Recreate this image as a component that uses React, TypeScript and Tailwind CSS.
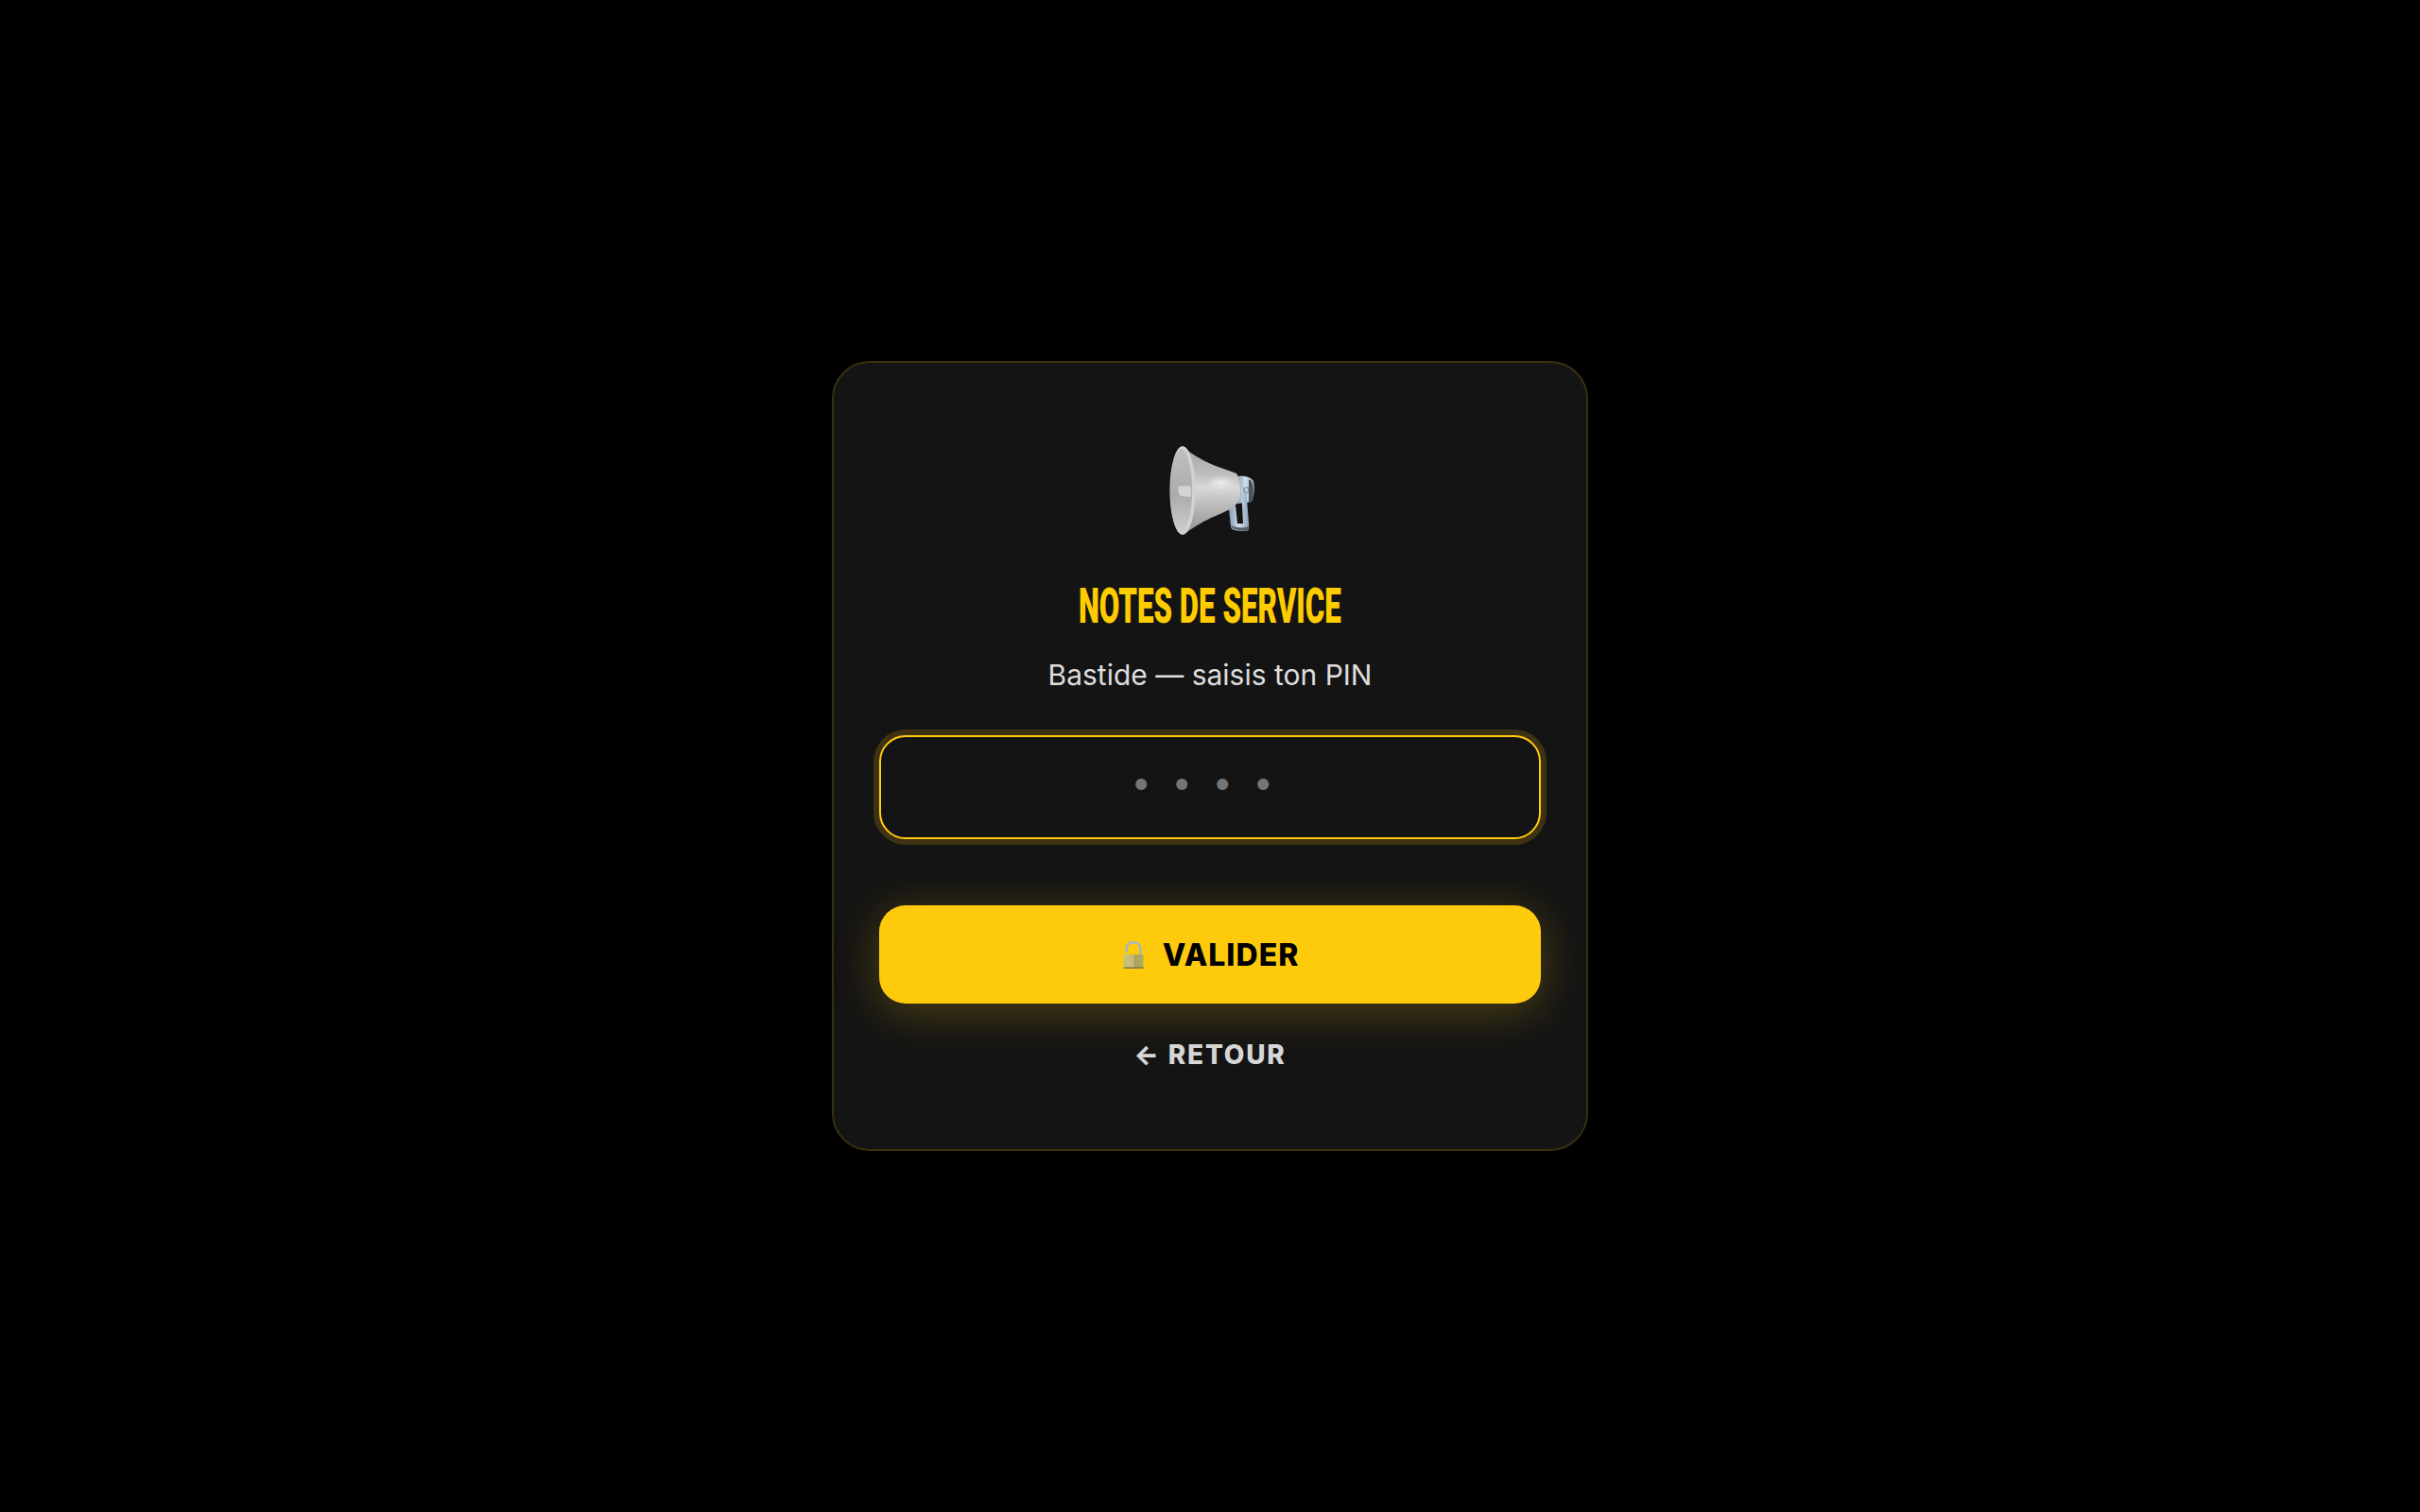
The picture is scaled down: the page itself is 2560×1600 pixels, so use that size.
import React from 'react';

const MegaphoneIcon = () => (
  <svg width="92" height="96" viewBox="38 20 92 96" className="ml-[6px]" aria-hidden="true">
    <defs>
      <linearGradient id="hornBody" x1="0" y1="0" x2="0" y2="1">
        <stop offset="0" stopColor="#a5a5a5" />
        <stop offset="0.3" stopColor="#bcbcbc" />
        <stop offset="0.47" stopColor="#d8d8d8" />
        <stop offset="0.65" stopColor="#bdbdbd" />
        <stop offset="1" stopColor="#909090" />
      </linearGradient>
      <linearGradient id="hornInner" x1="0" y1="0" x2="0" y2="1">
        <stop offset="0" stopColor="#c0c0c0" />
        <stop offset="0.55" stopColor="#ababab" />
        <stop offset="1" stopColor="#cdcdcd" />
      </linearGradient>
      <linearGradient id="steel" x1="0" y1="0" x2="1" y2="0">
        <stop offset="0" stopColor="#7f9ab3" />
        <stop offset="0.5" stopColor="#d3e0ea" />
        <stop offset="1" stopColor="#8aa3b9" />
      </linearGradient>
      <radialGradient id="hornShine" cx="0.5" cy="0.5" r="0.5">
        <stop offset="0" stopColor="#ececec" />
        <stop offset="1" stopColor="#ececec" stopOpacity="0" />
      </radialGradient>
    </defs>
    {/* back cap */}
    <path d="M109 53 C116 52 124 53 127 58 C128.500 65 128 73 125 80 L110 82 Z" fill="url(#steel)" />
    <path d="M124 57 C127.500 63 127.500 73 125 80 L122 80 L122 57 Z" fill="#4b5358" />
    {/* handle */}
    <path d="M101 88 L103 106 C103 109 106 110 110 110.500 L120 111 C123 110 122 106 122 102 L119 65 L114 65 L116 103 L110 103 L108 84 Z" fill="url(#steel)" />
    <path d="M103 105 C104 109 108 110 120 111 C123 110 122.500 108 122 106 C118 108 110 108 103 105 Z" fill="#5c6063" />
    {/* body */}
    <path d="M52 21.700 C60 28 70 35 87 42 C94 45 102 47 109 50 C113 56 114 70 112 78 C109 83 106 86 102 88 C96 91 91 93 87 95 C76 99 64 107 52 115 Z" fill="url(#hornBody)" />
    <ellipse cx="93" cy="60" rx="16" ry="8" fill="url(#hornShine)" />
    <ellipse cx="119.500" cy="67.500" rx="2.600" ry="2.800" fill="#c6d2dc" stroke="#58636c" strokeWidth="0.800" />
    {/* mouth */}
    <ellipse cx="52" cy="68" rx="13.500" ry="47" fill="#d2d2d2" />
    <ellipse cx="50.500" cy="68" rx="11.500" ry="44" fill="url(#hornInner)" />
    <path d="M48 63.500 L60 63 C61.500 66 61.500 72 60 75 L50 74 C47 72 47 65 48 63.500 Z" fill="#d2d2d2" />
  </svg>
);

const OpenLockIcon = () => (
  <svg width="22" height="30" viewBox="0 0 22 30" aria-hidden="true">
    <defs>
      <linearGradient id="lockBody" x1="0" y1="0" x2="1" y2="0">
        <stop offset="0" stopColor="#cbc27f" />
        <stop offset="0.5" stopColor="#c4ba74" />
        <stop offset="0.55" stopColor="#aaa15b" />
        <stop offset="1" stopColor="#b2a962" />
      </linearGradient>
    </defs>
    <path d="M3.500 12 L3.500 8 C3.500 -1 18.500 -1 18.500 8 L18.500 14" fill="none" stroke="#a8b6c0" strokeWidth="2.600" />
    <rect x="0.500" y="14" width="21" height="15" rx="1" fill="url(#lockBody)" />
    <rect x="0.500" y="27.500" width="21" height="1.500" fill="#7d7740" />
  </svg>
);

const App: React.FC = () => {
  return (
    <div className="min-h-screen bg-black flex items-center justify-center font-['Inter',sans-serif]">
      <div className="w-[800px] bg-[#141414] border-2 border-[#3a2f0e] rounded-[40px] px-[48px] pt-[87px] pb-[82px] flex flex-col items-center">
        <MegaphoneIcon />
        <h1 className="mt-[45px] h-[60px] leading-[60px] text-[52px] font-black text-[#ffcc00] font-['Roboto',sans-serif] whitespace-nowrap scale-x-[0.602]">
          NOTES DE SERVICE
        </h1>
        <p className="mt-[22px] h-[40px] leading-[40px] text-[30px] text-[#dddddd] font-normal">
          Bastide — saisis ton PIN
        </p>
        <input
          type="password"
          placeholder="••••"
          className="mt-[44px] w-full h-[110px] bg-[#141414] border-2 border-[#ffcc0d] rounded-[28px] ring-[6px] ring-[#3f3212] pl-[5px] pb-[13px] text-center text-[38px] tracking-[21.6px] outline-none placeholder:text-[#757575]"
        />
        <button className="mt-[70px] pt-[2px] pl-[2px] w-full h-[104px] bg-[#fdcb0c] rounded-[28px] shadow-[0_8px_48px_rgba(255,204,13,0.25)] flex items-center justify-center gap-[20px] text-[32px] font-extrabold text-black tracking-[1px]">
          <OpenLockIcon />
          VALIDER
        </button>
        <button className="mt-[36px] h-[36px] leading-[36px] text-[28px] font-extrabold text-[#d6d6d6] tracking-[1.8px]">
          ← RETOUR
        </button>
      </div>
    </div>
  );
};

export default App;
